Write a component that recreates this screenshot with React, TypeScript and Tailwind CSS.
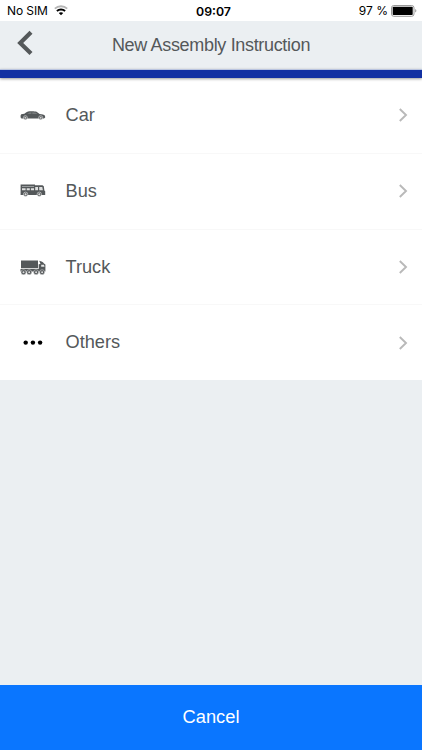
import type { ReactNode } from 'react'

interface VehicleOption {
  id: string
  label: string
  icon: ReactNode
}

function CarIcon() {
  return (
    <svg width="26" height="16" viewBox="0 0 26 16" fill="#54585a">
      <path d="M.6 8.6 1.2 7.3 4.4 6.7C6.2 5.4 7.6 4.5 9.4 4.3 12 4 15 4.1 16.6 4.8L19.6 7C22 7.2 24.2 7.7 25 8.7L25.2 10.6 24 11.5H1.5L.6 10.6Z" />
      <path d="M7.2 6.9 9.4 5.6 11.4 5.3V6.9ZM12.3 5.2C14 5.1 15.2 5.3 16 5.7L17.3 7H12.3Z" fill="#777b7c" />
      <circle cx="5.4" cy="10.7" r="2" stroke="#fff" strokeWidth=".5" />
      <circle cx="20.7" cy="10.7" r="2" stroke="#fff" strokeWidth=".5" />
      <circle cx="5.4" cy="10.7" r="1" fill="#ccc" />
      <circle cx="20.7" cy="10.7" r="1" fill="#ccc" />
    </svg>
  )
}

function BusIcon() {
  return (
    <svg width="26" height="16" viewBox="0 0 26 16" fill="#54585a">
      <path d="M.6 1.5H15V2.2H22.5L23.8 3.2 24.4 7.5 25.2 8.3V11.9H.6Z" />
      <path d="M2 3.3H14V3.8H2ZM2 5.3H5.6V7.2H2ZM6.7 5.3H9.8V7.2H6.7ZM10.9 5.3H14V7.2H10.9ZM15.2 4H18V7.2H15.2ZM19.2 4H22.3L22.9 7.2H19.2Z" fill="#dedfdf" />
      <circle cx="5.6" cy="11.3" r="2.2" stroke="#fff" strokeWidth=".5" />
      <circle cx="19.3" cy="11.3" r="2.2" stroke="#fff" strokeWidth=".5" />
      <circle cx="5.6" cy="11.3" r="1.1" fill="#ddd" />
      <circle cx="19.3" cy="11.3" r="1.1" fill="#ddd" />
    </svg>
  )
}

function TruckIcon() {
  return (
    <svg width="26" height="16" viewBox="0 0 26 16" fill="#54585a">
      <path d="M1 1.4H18V9.2H1ZM.5 9.9H25.4V12.4H.5ZM18.7 5.2 20.5 4.9 19.2 1.8C21.5 2.2 23.2 3.2 24 4.6L25.4 5.4V9.9H18.7Z" />
      <path d="M21.2 5.7H24L24.5 7.8H21.2Z" fill="#e5e6e6" />
      {[3.5, 9.2, 16.1, 22.1].map((cx) => (
        <g key={cx}>
          <circle cx={cx} cy="13.2" r="2.5" stroke="#fff" strokeWidth=".4" />
          <circle cx={cx} cy="13.2" r="1" fill="#ddd" />
        </g>
      ))}
    </svg>
  )
}

function DotsIcon() {
  return (
    <svg width="26" height="16" viewBox="0 0 26 16" fill="#000">
      <circle cx="5.7" cy="7.6" r="2.2" />
      <circle cx="12.9" cy="7.6" r="2.2" />
      <circle cx="20.1" cy="7.6" r="2.2" />
    </svg>
  )
}

const OPTIONS: VehicleOption[] = [
  { id: 'car', label: 'Car', icon: <CarIcon /> },
  { id: 'bus', label: 'Bus', icon: <BusIcon /> },
  { id: 'truck', label: 'Truck', icon: <TruckIcon /> },
  { id: 'others', label: 'Others', icon: <DotsIcon /> },
]

function StatusBar() {
  return (
    <div className="grid h-[21px] shrink-0 grid-cols-3 items-center bg-white pr-[5px] pl-[7px] font-['Inter',sans-serif] text-[12px] text-black">
      <div className="flex items-center gap-[6px]">
        <span className="tracking-[-0.1px]">No SIM</span>
        <svg width="14" height="11" viewBox="0 0 14 11" fill="none">
          <path d="M.8 3.7C4.3.4 9.7.4 13.2 3.7" stroke="#b5b5b5" strokeWidth="1.8" />
          <path d="M2.9 6C5.2 3.9 8.8 3.9 11.1 6" stroke="#000" strokeWidth="1.9" />
          <path d="M4.8 8C6 6.9 8 6.9 9.2 8L7 10.3Z" fill="#000" />
        </svg>
      </div>
      <span className="pt-[2px] pl-[3px] text-center text-[12.3px] leading-[18px] font-semibold">09:07</span>
      <div className="flex items-center justify-end gap-[3px]">
        <span>97 %</span>
        <svg width="26" height="12" viewBox="0 0 26 12">
          <rect x=".5" y=".5" width="22.5" height="10.8" rx="2.3" fill="#fff" stroke="#999" />
          <rect x="1.7" y="1.8" width="20" height="8.2" rx=".8" fill="#000" />
          <path d="M24.2 4C25.8 4.4 25.8 7.1 24.2 7.5Z" fill="#999" />
        </svg>
      </div>
    </div>
  )
}

export default function App() {
  return (
    <div className="flex h-[750px] w-[422px] flex-col overflow-hidden bg-[#ebeff2] font-['Liberation_Sans',Arial,sans-serif] text-[#54585a]">
      <StatusBar />

      <header className="grid h-[48px] shrink-0 grid-cols-[50px_1fr_50px] items-center">
        <button type="button" aria-label="Back" className="-mt-1 pl-[17px]">
          <svg width="17" height="26" viewBox="0 0 17 26" fill="none" stroke="#54585a" strokeWidth="4.2">
            <path d="M14 2.2 3.2 12.9 14 23.6" />
          </svg>
        </button>
        <h1 className="text-center text-[18px] tracking-[-0.33px] whitespace-nowrap">New Assembly Instruction</h1>
      </header>
      <div className="z-10 h-[9px] shrink-0 border-t border-[#b9c4e0] bg-[#1230a2] shadow-[0_1px_3px_rgba(0,0,0,0.4)]" />

      <ul className="shrink-0 bg-white">
        {OPTIONS.map((option) => (
          <li key={option.id} className="border-b border-[#f8f8f8] last:border-b-0">
            <button type="button" className="flex h-[74.75px] w-full items-center pr-[14px] pl-5 text-left">
              {option.icon}
              <span className="ml-[19.5px] flex-1 pt-px text-[18.2px]">{option.label}</span>
              <svg width="10" height="16" viewBox="0 0 10 16" fill="none" stroke="#b9b9b9" strokeWidth="1.9">
                <path d="M1.8 2 8 8 1.8 14" />
              </svg>
            </button>
          </li>
        ))}
      </ul>

      <button type="button" className="mt-auto h-[65.5px] shrink-0 bg-[#0a76ff] pb-[2px] text-[18.3px] text-white">
        Cancel
      </button>
    </div>
  )
}
